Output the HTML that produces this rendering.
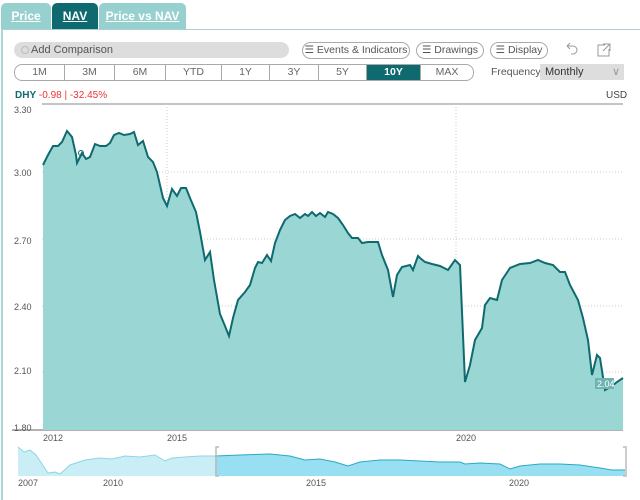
<!DOCTYPE html>
<html><head><meta charset="utf-8"><style>
body{margin:0;width:640px;height:487px;background:#fff;font-family:"Liberation Sans",sans-serif;position:relative;overflow:hidden}
.tab{position:absolute;top:3px;height:26px;border-radius:5px 5px 0 0;color:#fff;font-weight:bold;font-size:12px;text-decoration:underline;text-align:center;line-height:26px}
.panel{position:absolute;left:1px;top:29px;width:640px;height:470px;border-left:2px solid #a9d6d6;border-top:1px solid #a9cfd1}
.pill{position:absolute;height:15px;border:1px solid #aaa;border-radius:9px;font-size:10.5px;color:#555;line-height:15px;text-align:center;white-space:nowrap}
.ranges{position:absolute;left:14px;top:64px;height:15px;border:1px solid #aaa;border-radius:8px;display:flex;overflow:hidden}
.ranges div{height:15px;font-size:10.5px;color:#666;text-align:center;line-height:15px;border-right:1px solid #aaa;box-sizing:border-box}
.ax{position:absolute;font-size:9px;color:#555}
</style></head><body>
<div class="tab" style="left:1px;width:50px;background:#96d1d0">Price</div>
<div class="tab" style="left:52px;width:46px;background:#0f6a6f">NAV</div>
<div class="tab" style="left:99px;width:87px;background:#96d1d0">Price vs NAV</div>
<div class="panel"></div>
<div style="position:absolute;left:14px;top:42px;width:275px;height:16px;background:#ddd;border-radius:8px;font-size:11px;color:#555;line-height:16px;padding-left:17px;box-sizing:border-box">Add Comparison</div>
<div style="position:absolute;left:21px;top:46px;width:6px;height:6px;border:1px solid #bbb;border-radius:50%"></div>
<div class="pill" style="left:302px;top:42px;width:106px">☰ Events &amp; Indicators</div>
<div class="pill" style="left:416px;top:42px;width:66px">☰ Drawings</div>
<div class="pill" style="left:490px;top:42px;width:56px">☰ Display</div>
<svg width="640" height="487" style="position:absolute;left:0;top:0">
<path d="M567,46 l3,-3 M567,46 l3,3 M567,46 h6 a4,4 0 0 1 0,8 h-2" fill="none" stroke="#999"/>
<path d="M605,45 h-7 v11 h11 v-7 M603,44 h7 v7 M610,44 l-7,7" fill="none" stroke="#999"/>
</svg>
<div class="ranges">
<div style="width:50px">1M</div><div style="width:50px">3M</div><div style="width:51px">6M</div><div style="width:56px">YTD</div><div style="width:48px">1Y</div><div style="width:49px">3Y</div><div style="width:48px">5Y</div><div style="width:54px;background:#0f6a6f;color:#fff;font-weight:bold">10Y</div><div style="width:52px;border:none">MAX</div>
</div>
<div style="position:absolute;left:491px;top:66px;font-size:10.5px;color:#555">Frequency</div>
<div style="position:absolute;left:540px;top:64px;width:84px;height:16px;background:#ddd;font-size:11px;color:#333;line-height:16px;padding-left:5px;box-sizing:border-box">Monthly<span style="position:absolute;right:4px;color:#999">∨</span></div>
<div style="position:absolute;left:15px;top:90px;font-size:10px"><b style="color:#0f6a6f">DHY</b> <span style="color:#e33">-0.98 | -32.45%</span></div>
<div style="position:absolute;left:606px;top:90px;font-size:10px;color:#444">USD</div>
<div class="ax" style="left:14px;top:105px">3.30</div>
<div class="ax" style="left:14px;top:168px">3.00</div>
<div class="ax" style="left:14px;top:236px">2.70</div>
<div class="ax" style="left:14px;top:302px">2.40</div>
<div class="ax" style="left:14px;top:366px">2.10</div>
<div class="ax" style="left:14px;top:423px">1.80</div>
<div class="ax" style="left:43px;top:433px">2012</div>
<div class="ax" style="left:167px;top:433px">2015</div>
<div class="ax" style="left:456px;top:433px">2020</div>
<div class="ax" style="left:18px;top:478px">2007</div>
<div class="ax" style="left:103px;top:478px">2010</div>
<div class="ax" style="left:306px;top:478px">2015</div>
<div class="ax" style="left:509px;top:478px">2020</div>
<svg width="640" height="487" style="position:absolute;left:0;top:0">
<line x1="42" y1="104" x2="623" y2="104" stroke="#888"/>
<line x1="12" y1="430" x2="623" y2="430" stroke="#666"/>
<g stroke="#ccc" stroke-dasharray="1,2"><line x1="42" y1="172" x2="623" y2="172"/><line x1="42" y1="239" x2="623" y2="239"/><line x1="42" y1="306" x2="623" y2="306"/><line x1="42" y1="372" x2="623" y2="372"/><line x1="167" y1="104" x2="167" y2="430"/><line x1="456" y1="104" x2="456" y2="430"/></g>
<polygon fill="#9ad6d4" points="43,430 43,165 48,155 53,146 58,146 62,142 67,131 72,137 76,155 77,163 82,153 86,159 90,157 95,144 100,146 106,146 110,143 114,135 119,133 124,135 130,134 134,132 138,145 143,141 148,157 153,162 157,172 163,198 167,206 172,189 177,196 181,188 186,188 190,198 196,212 200,232 205,260 210,252 214,280 220,314 225,326 229,336 233,318 238,300 245,292 250,285 255,268 258,262 262,263 267,255 271,261 275,243 280,230 285,220 290,216 295,214 300,218 305,214 308,216 312,212 316,216 320,213 325,217 328,212 333,214 338,218 343,225 348,233 352,238 358,238 362,243 368,242 378,242 382,255 388,270 393,297 397,275 402,267 410,265 413,270 418,256 420,258 425,262 432,264 440,266 448,270 455,260 460,265 465,382 470,365 475,340 482,328 485,305 490,298 497,300 502,280 510,268 520,264 530,263 538,260 545,263 553,265 560,272 565,272 570,285 578,300 583,318 588,340 592,375 597,355 600,358 605,390 612,386 617,382 623,378 623,430"/>
<polyline fill="none" stroke="#0f6a6f" stroke-width="2" points="43,165 48,155 53,146 58,146 62,142 67,131 72,137 76,155 77,163 82,153 86,159 90,157 95,144 100,146 106,146 110,143 114,135 119,133 124,135 130,134 134,132 138,145 143,141 148,157 153,162 157,172 163,198 167,206 172,189 177,196 181,188 186,188 190,198 196,212 200,232 205,260 210,252 214,280 220,314 225,326 229,336 233,318 238,300 245,292 250,285 255,268 258,262 262,263 267,255 271,261 275,243 280,230 285,220 290,216 295,214 300,218 305,214 308,216 312,212 316,216 320,213 325,217 328,212 333,214 338,218 343,225 348,233 352,238 358,238 362,243 368,242 378,242 382,255 388,270 393,297 397,275 402,267 410,265 413,270 418,256 420,258 425,262 432,264 440,266 448,270 455,260 460,265 465,382 470,365 475,340 482,328 485,305 490,298 497,300 502,280 510,268 520,264 530,263 538,260 545,263 553,265 560,272 565,272 570,285 578,300 583,318 588,340 592,375 597,355 600,358 605,390 612,386 617,382 623,378"/>
<circle cx="81" cy="153" r="2.5" fill="none" stroke="#0f6a6f"/>
<rect x="595" y="378" width="19" height="11" fill="#6fb3b3"/>
<text x="597" y="387" font-size="9" fill="#fff" font-family="Liberation Sans">2.04</text>
<polygon fill="#c9eef6" points="18,476 18,447 24,452 30,450 36,455 48,473 55,472 60,474 70,465 85,460 100,458 112,459 125,456 140,457 155,455 165,461 172,458 185,457 200,456 215,456 215,476"/>
<polyline fill="none" stroke="#8fd5e5" points="18,447 24,452 30,450 36,455 48,473 55,472 60,474 70,465 85,460 100,458 112,459 125,456 140,457 155,455 165,461 172,458 185,457 200,456 215,456"/>
<polygon fill="#98dff1" points="215,476 215,456 240,455 270,454 290,456 305,460 320,459 335,462 348,466 360,462 380,460 400,460 420,461 440,462 460,462 465,464 480,463 500,464 510,469 520,466 540,464 560,464 580,465 600,468 612,470 625,470 625,476"/>
<polyline fill="none" stroke="#2aa9c6" points="215,456 240,455 270,454 290,456 305,460 320,459 335,462 348,466 360,462 380,460 400,460 420,461 440,462 460,462 465,464 480,463 500,464 510,469 520,466 540,464 560,464 580,465 600,468 612,470 625,470"/>
<path d="M219,447 h-3 v29 h3 M623,447 h3 v29 h-3" fill="none" stroke="#bbb" stroke-width="1.5"/>
</svg>
</body></html>
